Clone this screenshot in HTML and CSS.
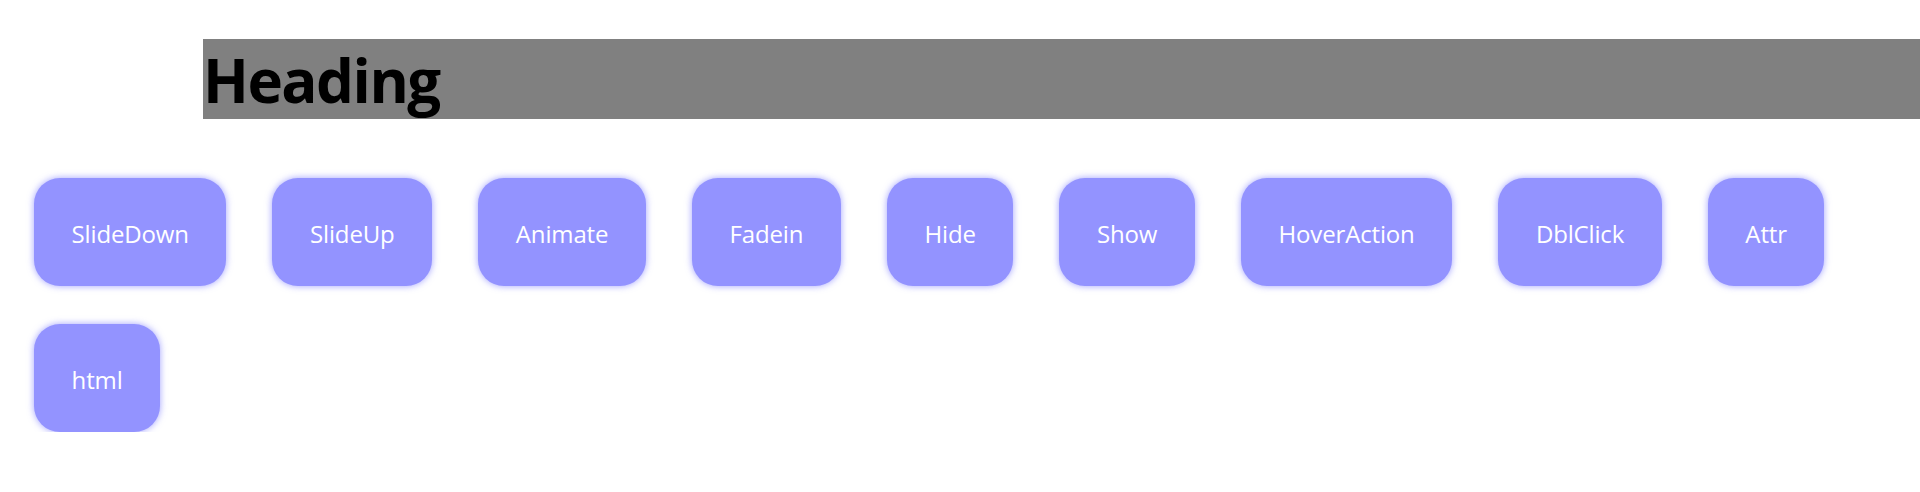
FILE: index.html
```html
<!DOCTYPE html>
<html lang="en">
<head>
<meta charset="utf-8">
<title>Buttons</title>
<link rel="stylesheet" href="styles.css">
</head>
<body>
<h1 class="heading">Heading</h1>
<div class="actions">
  <button class="action">SlideDown</button>
  <button class="action">SlideUp</button>
  <button class="action">Animate</button>
  <button class="action">Fadein</button>
  <button class="action">Hide</button>
  <button class="action">Show</button>
  <button class="action">HoverAction</button>
  <button class="action">DblClick</button>
  <button class="action">Attr</button>
  <button class="action">html</button>
</div>
</body>
</html>
```
FILE: styles.css
```css
html, body {
  margin: 0;
  padding: 0;
  background: #ffffff;
}

body {
  font-family: "Open Sans", "Noto Sans", sans-serif;
}

.heading {
  margin: 39px 0 0 203px;
  padding-top: 3px;
  background: #808080;
  color: #000000;
  font-size: 60px;
  font-weight: 700;
  line-height: 77px;
  height: 77px;
  letter-spacing: -1.5px;
}

.actions {
  display: flex;
  flex-wrap: wrap;
  column-gap: 46px;
  row-gap: 38px;
  margin-top: 59px;
  padding-left: 34px;
}

.action {
  font-family: "Open Sans", "Noto Sans", sans-serif;
  font-size: 24px;
  line-height: 32px;
  color: #ffffff;
  background: #9393ff;
  border: none;
  border-radius: 26px;
  padding: 40px 37.6px 36px;
  letter-spacing: -0.15px;
  box-shadow: 0 0 7px rgba(130, 130, 255, 0.75);
  cursor: pointer;
}
```
